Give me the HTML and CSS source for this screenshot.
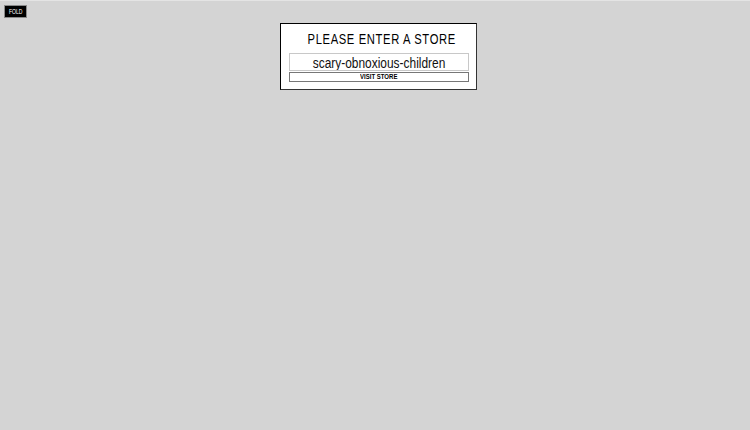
FILE: index.html
```html
<!DOCTYPE html>
<html>
<head>
<meta charset="utf-8">
<link rel="stylesheet" href="styles.css">
</head>
<body>
<button class="fold"><span class="fold-label">FOLD</span></button>
<main class="stage">
  <form class="store-box">
    <h1 class="title"><span class="title-text">PLEASE ENTER A STORE</span></h1>
    <div class="field">
      <input class="store-input" type="text" value="scary-obnoxious-children">
    </div>
    <button class="visit" type="button"><span class="visit-label">VISIT STORE</span></button>
  </form>
</main>
</body>
</html>
```
FILE: styles.css
```css
html, body {
  margin: 0;
  padding: 0;
  background: #d4d4d4;
  height: 100%;
}
body {
  font-family: "Liberation Sans", Arial, sans-serif;
  border-top: 1px solid #e4e4e4;
  box-sizing: border-box;
}
.fold {
  position: absolute;
  left: 4px;
  top: 5px;
  width: 23px;
  height: 13px;
  padding: 0;
  margin: 0;
  background: #000;
  color: #fff;
  border: 1px solid #8a8a8a;
  font-family: "Liberation Sans", Arial, sans-serif;
  font-size: 6.5px;
  line-height: 11px;
  text-align: center;
}
.fold-label {
  display: inline-block;
  transform: scaleX(0.78);
}
.stage {
  display: flex;
  justify-content: center;
  padding-top: 22px;
  padding-left: 7px;
}
.store-box {
  width: 179px;
  background: #fff;
  border: 1px solid #000;
  border-right-color: #333;
  border-bottom-color: #333;
  padding: 6px 8px 7px 8px;
  display: flex;
  flex-direction: column;
  margin: 0;
}
.title {
  margin: 0 0 5px 0;
  padding-right: 4px;
  font-size: 14px;
  font-weight: normal;
  text-align: center;
  line-height: 18px;
  color: #000;
  white-space: nowrap;
}
.title-text {
  display: inline-block;
  letter-spacing: 0.8px;
  transform: scaleX(0.8);
}
.field {
  box-sizing: border-box;
  width: 180px;
  height: 18px;
  border: 1px solid #c8c8c8;
  overflow: hidden;
  background: #fff;
}
.store-input {
  box-sizing: border-box;
  width: 209px;
  height: 16px;
  margin: 0;
  padding: 0;
  border: 0;
  background: transparent;
  font-family: "Liberation Sans", Arial, sans-serif;
  font-size: 14px;
  text-align: center;
  color: #111;
  outline: none;
  transform: scaleX(0.852);
  transform-origin: left center;
}
.visit {
  box-sizing: border-box;
  width: 180px;
  height: 10px;
  margin: 1px 0 0 0;
  padding: 0;
  border: 1px solid #777;
  background: #fff;
  font-family: "Liberation Sans", Arial, sans-serif;
  font-weight: bold;
  font-size: 7px;
  line-height: 8px;
  color: #000;
}
.visit-label {
  display: inline-block;
  transform: scaleX(0.86);
}
```
